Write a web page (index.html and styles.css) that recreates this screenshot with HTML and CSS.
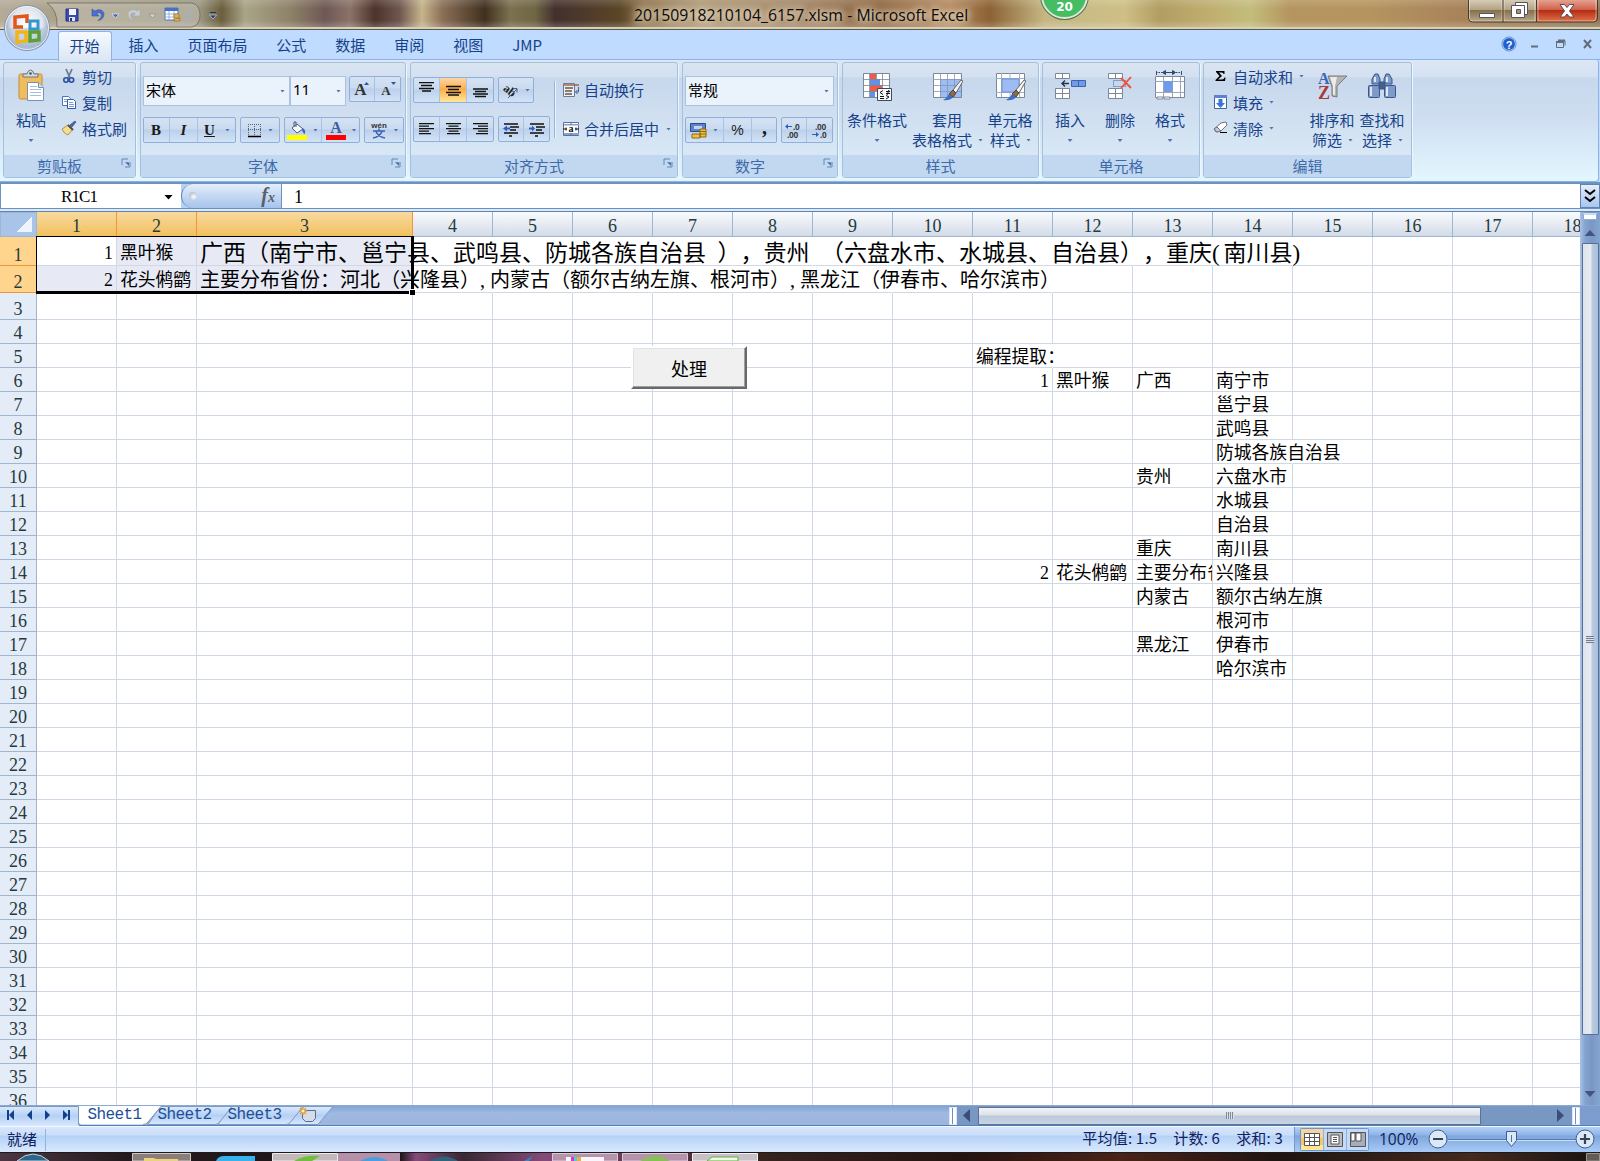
FILE: index.html
```html
<!DOCTYPE html>
<html lang="zh-CN">
<head>
<meta charset="utf-8">
<title>20150918210104_6157.xlsm - Microsoft Excel</title>
<link rel="stylesheet" href="styles.css">
</head>
<body>
<div class="window">

  <header class="titlebar">
    <svg class="qat" width="230" height="29" viewBox="0 0 230 29">
      <path d="M47 3H192q8 2 8 12t-8 12H57Q58 10 47 3z" fill="#dcd8d0" fill-opacity=".35" stroke="#6b665e" stroke-opacity=".75"/>
      <g>
        <path d="M66 9h12v12H66z" fill="#3c49b4" stroke="#26307c"/><path d="M69 9h7v6h-7z" fill="#f3f5fb"/><path d="M69 17h6v4h-6z" fill="#dfe4f4"/><path d="M70 18h2v3h-2z" fill="#26307c"/>
        <path d="M92 9v7h7l-2.500-2.500q4-2 5 1 .5 3-3.500 6 6-1 6-7-2-6-9.500-2.500z" fill="#4a72cc" stroke="#2d50a4" stroke-width=".6"/>
        <path d="M112 14h7l-3.500 4z" fill="#3f66a8" stroke="#e8eef8" stroke-width=".7"/>
        <path d="M140 9v7h-7l2.500-2.500q-4-2-5 1-.5 3 3.500 6-6-1-6-7 2-6 9.500-2.500z" fill="#c9cfd6" stroke="#a4a9ad" stroke-width=".6"/>
        <path d="M149 14h7l-3.500 4z" fill="#d5d5d5" stroke="#8f8c86" stroke-width=".7"/>
        <path d="M165 8h13v12h-13z" fill="#fff" stroke="#4f76b8"/><path d="M165 8h13v3h-13z" fill="#4772c4"/><path d="M165 14h13M165 17h13M169 11v9M174 11v9" stroke="#85a3d6" stroke-width=".8"/>
        <path d="M174 14h5v4h-5zM174 19l6-1v3h-6z" fill="#e2b04a" stroke="#8e6b22" stroke-width=".6"/>
        <path d="M189.500 9v13" stroke="#8fb4e6"/>
        <path d="M210 12.500h6" stroke="#24344f"/><path d="M209.500 15h7l-3.500 4z" fill="#24406e" stroke="#dce4ee" stroke-width=".6"/>
      </g>
    </svg>
    <h1 class="title">20150918210104_6157.xlsm - Microsoft Excel</h1>
    <span class="score">20</span>
    <svg class="winbtns" width="132" height="24" viewBox="0 0 132 24">
      <defs><linearGradient id="wg" x2="0" y2="1"><stop offset="0" stop-color="#d9cfba"/><stop offset=".47" stop-color="#b3a283"/><stop offset=".5" stop-color="#86714e"/><stop offset="1" stop-color="#bba987"/></linearGradient>
      <linearGradient id="wr" x2="0" y2="1"><stop offset="0" stop-color="#e6a897"/><stop offset=".47" stop-color="#cf604a"/><stop offset=".5" stop-color="#b52c12"/><stop offset="1" stop-color="#e2754f"/></linearGradient></defs>
      <path d="M1.500-1v19q0 4 4 4h121q4 0 4-4v-19z" fill="url(#wg)"/>
      <path d="M70-1v23h57q3 0 3-4v-19z" fill="url(#wr)"/>
      <path d="M2.500 0v18q0 3 3 3H35V0M37 0v21h31V0M71 0v21h55q3 0 3-3V0" fill="none" stroke="#fff" stroke-opacity=".45"/>
      <path d="M1.500-1v19q0 4 4 4h121q4 0 4-4v-19M36 0v22M69.500 0v22" fill="none" stroke="#4a3c2a"/>
      <path d="M12.500 13.500h15v4h-15z" fill="#fff" stroke="#54535e"/>
      <path d="M48.500 2.500h12v12h-3v3h-13v-12h4z" fill="#fff" stroke="#54535e"/><path d="M49.500 9.500h4v4h-4z" fill="#a4936f" stroke="#54535e"/><path d="M48 5.500h9.500V15" fill="none" stroke="#54535e"/>
      <path d="M93 4.500h4.500l2.500 3 2.500-3h4.500l-4.500 6.500 4.500 6h-4.500l-2.500-3-2.500 3H93l4.500-6z" fill="#fff" stroke="#5a4a52"/>
    </svg>
  </header>

  <nav class="tabs">
    <span class="tab active">开始</span><span class="tab">插入</span><span class="tab">页面布局</span><span class="tab">公式</span><span class="tab">数据</span><span class="tab">审阅</span><span class="tab">视图</span><span class="tab">JMP</span>
    <svg class="docbtns" width="100" height="28" viewBox="0 0 100 28">
      <circle cx="13" cy="14" r="6.500" fill="#1f5fd0" stroke="#f3f8ff"/><circle cx="13" cy="14" r="7" fill="none" stroke="#2f62b4" stroke-width=".7"/>
      <text x="13" y="18.500" text-anchor="middle" class="help">?</text>
      <path d="M35 16.500h7" stroke="#636c7a" stroke-width="2"/>
      <path d="M60.500 12.500h7v5h-7zM63 10.500h6v5" fill="none" stroke="#636c7a"/><path d="M60 12h8M62 10.500h7" stroke="#636c7a" stroke-width="2"/>
      <path d="M88 10l7 8M95 10l-7 8" stroke="#636c7a" stroke-width="2"/>
    </svg>
    <svg class="orb" width="54" height="54" viewBox="0 0 54 54">
      <defs><radialGradient id="og" cx=".5" cy=".4"><stop offset="0" stop-color="#fff"/><stop offset=".7" stop-color="#dfe5ee"/><stop offset="1" stop-color="#93a4bd"/></radialGradient></defs>
      <circle cx="27" cy="27" r="22.500" fill="url(#og)" stroke="#8493aa"/>
      <path d="M6 27h42a21 21 0 0 1-42 0z" fill="#b5c7df" opacity=".65"/>
      <circle cx="27" cy="27" r="21.500" fill="none" stroke="#fff" stroke-opacity=".8"/>
      <g fill="none" stroke-width="3.500"><path d="M27 22v-7l-12 1v10h8" stroke="#e2561c"/><path d="M30 20h8v8h-8z" stroke="#3496cf" stroke-width="3"/><path d="M17 31h9v9l-9 1z" stroke="#f2b41b"/><path d="M30 31h9v8l-9 1z" stroke="#5c9f35"/></g>
    </svg>
  </nav>

  <section class="ribbon">
    <div class="group clipboard">
      <div class="body">
        <div class="big paste">
          <svg width="32" height="34" viewBox="0 0 32 34"><rect x="4" y="5" width="23" height="25" rx="1.500" fill="#f0bd5d" stroke="#c48d32"/><path d="M8 8h15V5h-4q-1-4-3.500-4T12 5H8z" fill="#d8dce2" stroke="#6d7480"/><circle cx="15.500" cy="4.500" r="1.300" fill="#4a5260"/><path d="M12.500 13.500h11l5 5v13h-16z" fill="#fff" stroke="#7690b8"/><path d="M23.500 13.500v5h5" fill="#d3dff0" stroke="#7690b8"/><path d="M15 17.500h7M15 20.500h11M15 23.500h11M15 26.500h11" stroke="#a8bcdb"/></svg>
          <span>粘贴</span><i class="arr"></i>
        </div>
        <div class="list">
          <div><svg width="16" height="16" viewBox="0 0 16 16"><path d="M5 1l4 9M11 1L7 10" stroke="#6d7c96" stroke-width="1.800"/><circle cx="5" cy="12" r="2.200" fill="none" stroke="#27509f" stroke-width="1.600"/><circle cx="10.500" cy="12" r="2.200" fill="none" stroke="#27509f" stroke-width="1.600"/></svg>剪切</div>
          <div><svg width="16" height="16" viewBox="0 0 16 16"><path d="M1.500 2.500h6l2 2v7h-8z" fill="#fff" stroke="#4b74b5"/><path d="M6.500 5.500h6l2 2v7h-8z" fill="#fff" stroke="#2f5ba6"/><path d="M3 5.500h3M3 7.500h3M8 8.500h4M8 10.500h5M8 12.500h5" stroke="#7d9bd0"/></svg>复制</div>
          <div><svg width="16" height="16" viewBox="0 0 16 16"><path d="M9 5l5-4 1 1-4 5z" fill="#4966a8" stroke="#2b4074" stroke-width=".6"/><path d="M1 9l6-4 5 4-5 6q-4-1-6-6z" fill="#f5df8e" stroke="#9a7f3a" stroke-width=".8"/><path d="M7 5l5 5" stroke="#4d4d55" stroke-width="2"/></svg>格式刷</div>
        </div>
      </div>
      <div class="label launch">剪贴板<svg class="dl" width="10" height="10" viewBox="0 0 10 10"><path d="M1 7V1h6M9 4v5H4" fill="none" stroke="#6286b8"/><path d="M4 4l4 4V4.500z" fill="#46699e"/></svg></div>
    </div>

    <div class="group font">
      <div class="body rows">
        <div class="row r1">
          <div class="combo w146">宋体<i class="arr"></i></div><div class="combo w56 near"><span class="num">11</span><i class="arr"></i></div>
          <div class="btns pair"><span class="b w26"><b class="gr1">A</b><i class="tri up"></i></span><span class="b w26"><b class="gr2">A</b><i class="tri dn"></i></span></div>
        </div>
        <div class="row r2">
          <div class="btns"><span class="b w27 bold">B</span><span class="b w28 ital">I</span><span class="b w38 under"><u>U</u><i class="arr"></i></span></div>
          <div class="btns"><span class="b w39"><svg width="15" height="15" viewBox="0 0 15 15"><path d="M1.500 1v11M7.500 1v11M13.500 1v11M1 1.500h13M1 6.500h13" stroke="#56627c" stroke-dasharray="1 1"/><path d="M1 13.500h13" stroke="#000" stroke-width="1.500"/></svg><i class="arr"></i></span></div>
          <div class="btns"><span class="b w38"><svg width="20" height="19" viewBox="0 0 20 19"><path d="M5 7l5-4 6 5-6 4z" fill="#f7f9fc" stroke="#4c5c78"/><path d="M9 6V1H7v5" fill="none" stroke="#4c5c78"/><path d="M15 7q4 1 3 6-3-1-3-6z" fill="#3567be"/><path d="M0 14h20v5H0z" fill="#ff0"/></svg><i class="arr"></i></span><span class="b w38"><svg width="20" height="19" viewBox="0 0 20 19"><text x="10" y="12" text-anchor="middle" class="acol">A</text><path d="M0 14h20v5H0z" fill="#f00"/></svg><i class="arr"></i></span></div>
          <div class="btns"><span class="b w39"><svg width="18" height="18" viewBox="0 0 18 18"><text x="9" y="7" text-anchor="middle" class="wen">wén</text><path d="M9 7.500v2M3 10h12M6 10.500q2 5 9 6.500M12 10.500q-2 5-9 6.500" fill="none" stroke="#3a62b4" stroke-width="1.500"/></svg><i class="arr"></i></span></div>
        </div>
      </div>
      <div class="label launch">字体<svg class="dl" width="10" height="10" viewBox="0 0 10 10"><path d="M1 7V1h6M9 4v5H4" fill="none" stroke="#6286b8"/><path d="M4 4l4 4V4.500z" fill="#46699e"/></svg></div>
    </div>

    <div class="group align">
      <div class="body split">
        <div class="rows">
          <div class="row r1">
            <div class="btns"><span class="b w27"><svg width="15" height="16" viewBox="0 0 15 16"><path d="M0 2.500h15M2 5.500h11M0 8.500h15M3 11h9" transform="translate(0 -2)" stroke="#111" stroke-width="1.300"/></svg></span><span class="b w27 on"><svg width="15" height="16" viewBox="0 0 15 16"><path d="M0 4.500h15M2 7.500h11M0 10.500h15M2 13h11" stroke="#111" stroke-width="1.300"/></svg></span><span class="b w27"><svg width="15" height="16" viewBox="0 0 15 16"><path d="M0 7h15M2 9.500h11M0 12h15M2 14.500h11" stroke="#111" stroke-width="1.300"/></svg></span></div>
            <div class="btns"><span class="b w36"><svg width="17" height="17" viewBox="0 0 17 17"><text x="1" y="8" transform="rotate(38 1 7)" class="abt">ab</text><path d="M6 16L15 7M11 6.500h4v4" fill="none" stroke="#555d6b"/></svg><i class="arr"></i></span></div>
          </div>
          <div class="row r2">
            <div class="btns"><span class="b w27"><svg width="15" height="12" viewBox="0 0 15 12"><path d="M0 .7h15M0 3.200h10M0 5.700h15M0 8.200h10M0 10.700h12" stroke="#111" stroke-width="1.300"/></svg></span><span class="b w27"><svg width="15" height="12" viewBox="0 0 15 12"><path d="M0 .7h15M2.500 3.200h10M0 5.700h15M2.500 8.200h10M1 10.700h13" stroke="#111" stroke-width="1.300"/></svg></span><span class="b w27"><svg width="15" height="12" viewBox="0 0 15 12"><path d="M0 .7h15M5 3.200h10M0 5.700h15M5 8.200h10M3 10.700h12" stroke="#111" stroke-width="1.300"/></svg></span></div>
            <div class="btns"><span class="b w26"><svg width="16" height="15" viewBox="0 0 16 15"><path d="M1 2h14M7 5h9M7 8h6M1 11h14M6 14h3" stroke="#111" stroke-width="1.400"/><path d="M0 6.500l4-3v2h3v2H4v2z" fill="#2b5fc4"/></svg></span><span class="b w26"><svg width="16" height="15" viewBox="0 0 16 15"><path d="M1 2h14M7 5h9M7 8h6M1 11h14M6 14h3" stroke="#111" stroke-width="1.400"/><path d="M6 6.500l-3-3v2H0v2h3v2z" fill="#2b5fc4"/></svg></span></div>
          </div>
        </div>
        <div class="side">
          <div><svg width="17" height="16" viewBox="0 0 17 16"><path d="M.5 1.500h11v13H.5z" fill="#e9f0fa" stroke="#6c7c98"/><path d="M1 3h15" stroke="#a05a32" stroke-width="1.400"/><path d="M2 6h8M2 9h7M2 12h7" stroke="#6c5640" stroke-width="1.300"/><path d="M15.500 5v5h-3m2-2l-2 2 2 2" fill="none" stroke="#4a6594"/></svg><span>自动换行</span></div>
          <div><svg width="17" height="16" viewBox="0 0 17 16"><path d="M.5 1.500h15v13H.5z" fill="#fff" stroke="#5e7195"/><path d="M1 3h15v1.500H1zM1 12h15v2H1z" fill="#85a3d0"/><path d="M8 1v3M8 12v3" stroke="#5e7195"/><text x="8" y="11" text-anchor="middle" class="mg">a</text><path d="M0 8h4M12 8h4M3 6.500v3M13 6.500v3" stroke="#111"/></svg><span>合并后居中</span><i class="arr"></i></div>
        </div>
      </div>
      <div class="label launch">对齐方式<svg class="dl" width="10" height="10" viewBox="0 0 10 10"><path d="M1 7V1h6M9 4v5H4" fill="none" stroke="#6286b8"/><path d="M4 4l4 4V4.500z" fill="#46699e"/></svg></div>
    </div>

    <div class="group number">
      <div class="body rows">
        <div class="row r1"><div class="combo w149">常规<i class="arr"></i></div></div>
        <div class="row r2">
          <div class="btns"><span class="b w39"><svg width="17" height="17" viewBox="0 0 17 17"><path d="M.5 1.500h15v8H.5z" fill="#5c83cc" stroke="#28498d"/><path d="M4 4h8v3H4z" fill="#c3d5f2"/><path d="M10 7h6v8h-6zM2 12h8v4H2z" fill="#efc03e" stroke="#8f6814"/><path d="M10 9.500h6M10 12h6" stroke="#8f6814"/></svg><i class="arr"></i></span><span class="b w28 pct">%</span><span class="b w25 comma">,</span></div>
          <div class="btns"><span class="b w26"><svg width="17" height="15" viewBox="0 0 17 15"><text x="8" y="7" class="dec">.0</text><text x="2" y="14.500" class="dec">.00</text><path d="M0 3.500l3-2.500v2h4v1H3v2z" fill="#2b5fc4"/></svg></span><span class="b w26"><svg width="17" height="15" viewBox="0 0 17 15"><text x="3" y="7" class="dec">.00</text><text x="8" y="14.500" class="dec">.0</text><path d="M7 11.500L4 9v2H0v1h4v2z" fill="#2b5fc4"/></svg></span></div>
        </div>
      </div>
      <div class="label launch">数字<svg class="dl" width="10" height="10" viewBox="0 0 10 10"><path d="M1 7V1h6M9 4v5H4" fill="none" stroke="#6286b8"/><path d="M4 4l4 4V4.500z" fill="#46699e"/></svg></div>
    </div>

    <div class="group styles">
      <div class="body">
        <div class="big w68"><svg width="32" height="34" viewBox="0 0 32 34"><path d="M2.500 4.500h26v24h-26z" fill="#fff" stroke="#7c879a"/><path d="M9 5h6v5H9zM9 16h12v6H9z" fill="#ef5b43"/><path d="M9 10h10v6H9zM9 22h5v6H9z" fill="#6491e4"/><path d="M2 10.500h27M2 16.500h27M2 22.500h27M8.500 4v25M15.500 4v6M21.500 4v25" stroke="#7c879a" stroke-width=".8"/><path d="M16.500 19.500h14v12h-14z" fill="#f5f8fd" stroke="#3c4a64"/><path d="M22 21.500l-3 2 3 2M19 27.500h4M19 29.500h4M25 22.500h4M25 24.500h4M28 21l-2 5M25 26.500l3 1.500-3 2" fill="none" stroke="#111"/></svg><span>条件格式</span><i class="arr"></i></div>
        <div class="big w72"><svg width="32" height="34" viewBox="0 0 32 34"><path d="M2.500 4.500h28v24h-28z" fill="#fff" stroke="#7c879a"/><path d="M9 10h21v18H9z" fill="#9ebcf4"/><path d="M2 10.500h28M2 16.500h28M2 22.500h28M9.500 4v24M16.500 4v24M23.500 4v24" stroke="#8595b4" stroke-width=".8"/><path d="M30 11l2 1-7 12-3-3z" fill="#f3f3f3" stroke="#666"/><path d="M22 21l3 3-3 4-4-3z" fill="#8d6b46" stroke="#564028"/><path d="M18 25l4 3q-3 4-10 3 4-2 6-6z" fill="#3e6fc6"/></svg><span>套用</span><span class="l2">表格格式<i class="arr"></i></span></div>
        <div class="big w54"><svg width="32" height="34" viewBox="0 0 32 34"><path d="M2.500 4.500h28v24h-28z" fill="#fff" stroke="#7c879a"/><path d="M2 9.500h28M2 23.500h28M7.500 4v24M25.500 4v24M16 4v5M16 24v4" stroke="#a3aec0"/><path d="M8 10h17v13H8z" fill="#9ebcf4" stroke="#6c91da"/><path d="M30 11l2 1-7 12-3-3z" fill="#f3f3f3" stroke="#666"/><path d="M22 21l3 3-3 4-4-3z" fill="#8d6b46" stroke="#564028"/><path d="M18 25l4 3q-3 4-10 3 4-2 6-6z" fill="#3e6fc6"/></svg><span>单元格</span><span class="l2">样式<i class="arr"></i></span></div>
      </div>
      <div class="label">样式</div>
    </div>

    <div class="group cells">
      <div class="body">
        <div class="big w50"><svg width="32" height="34" viewBox="0 0 32 34"><path d="M1.500 4.500h14v5h-14zM8.500 4v5M1.500 19.500h14v10h-14zM8.500 19v10M1 24.500h15" fill="#fff" stroke="#7c879a"/><path d="M17.500 11.500h14v6h-14z" fill="#6f9bea" stroke="#3f62a8"/><path d="M24.500 11v7" stroke="#3f62a8"/><path d="M15 14.500H8m3-3l-3 3 3 3" fill="none" stroke="#1f3550" stroke-width="1.400"/></svg><span>插入</span><i class="arr"></i></div>
        <div class="big w50"><svg width="32" height="34" viewBox="0 0 32 34"><path d="M4.500 4.500h14v5h-14zM11.500 4v5M4.500 19.500h14v10h-14zM11.500 19v10M4 24.500h15" fill="#fff" stroke="#7c879a"/><path d="M9.500 11.500h12v6h-12z" fill="none" stroke="#3f62a8" stroke-dasharray="1 1"/><path d="M17 9l10 10M27 8L17 19" stroke="#ee5039" stroke-width="1.800"/></svg><span>删除</span><i class="arr"></i></div>
        <div class="big w50"><svg width="32" height="34" viewBox="0 0 32 34"><path d="M2 3.500h25" stroke="#2f4a70" stroke-dasharray="1.500 1"/><path d="M2.500 2v4M27.500 2v4M9 3.500h12M8.500 3.500l3-2v4zM21.500 3.500l-3-2v4z" fill="#1f3550" stroke="#2f4a70"/><path d="M1.500 7.500h29v21h-29z" fill="#fff" stroke="#7c879a"/><path d="M1 12.500h29M1 23.500h29M9.500 8v20M18.500 8v20M26.500 8v20" stroke="#9aa6bb"/><path d="M10 12h8.500v11H10z" fill="#6f9bea"/><path d="M3 28h6v2H3zM10 28h6v2h-6z" fill="#fff" stroke="#7c879a"/></svg><span>格式</span><i class="arr"></i></div>
      </div>
      <div class="label">单元格</div>
    </div>

    <div class="group edit">
      <div class="body">
        <div class="list">
          <div><svg width="15" height="16" viewBox="0 0 15 16"><path d="M3 3h8.500v3h-1q0-1.500-2-1.500H6L9 8l-4 3.500h4q2 0 2.500-2h1L12 13H2.500v-1L6.500 8 3 4z" fill="#000"/></svg>自动求和<i class="arr"></i></div>
          <div><svg width="15" height="16" viewBox="0 0 15 16"><path d="M1.500 1.500h12v13h-12z" fill="#fff" stroke="#44659c"/><path d="M1 1h13v3H1z" fill="#5b84cd"/><path d="M5.500 5h4v4h2.500l-4.500 5L3 9h2.500z" fill="#3b73dd"/></svg>填充<i class="arr"></i></div>
          <div><svg width="15" height="16" viewBox="0 0 15 16"><path d="M8 3l5-1 1 3-6 6-5 1-2-3z" fill="#fff" stroke="#6a7484"/><path d="M1 9l3 3 4-1-4-4z" fill="#c4c9d4" stroke="#6a7484"/><path d="M7 12.500h7" stroke="#000"/></svg>清除<i class="arr"></i></div>
        </div>
        <div class="big w50"><svg width="32" height="34" viewBox="0 0 32 34"><path d="M12 7h19L21 17v11l-5-1v-9z" fill="#b4b4b4" stroke="#7a7a7a"/><path d="M14 8h7l-2 9v9l-2-.5V17z" fill="#ececec"/><text x="2" y="15" class="sa">A</text><text x="2" y="30" class="sz">Z</text></svg><span>排序和</span><span class="l2">筛选<i class="arr"></i></span></div>
        <div class="big w50"><svg width="32" height="34" viewBox="0 0 32 34"><g fill="#7e9ac8" stroke="#3a5688"><path d="M9 5h3l2 5v5H6v-5zM20 5h3l3 5v5h-8v-5z"/><rect x="2.500" y="16.500" width="11" height="12" rx="1"/><rect x="18.500" y="16.500" width="11" height="12" rx="1"/><path d="M13 13h6v7h-6z" fill="#465f8f"/></g><path d="M5 18v9M21 18v9M9 8v5M21 8v5" stroke="#dce7f8" stroke-width="2"/></svg><span>查找和</span><span class="l2">选择<i class="arr"></i></span></div>
      </div>
      <div class="label">编辑</div>
    </div>
  </section>

  <section class="formula">
    <div class="namebox">R1C1<i class="bigarr"></i></div>
    <div class="fx"><i class="knob"></i><em>f<small>x</small></em></div>
    <div class="value">1</div>
    <div class="expand"><svg width="14" height="16" viewBox="0 0 14 16"><path d="M2 2l5 4 5-4M2 9l5 4 5-4" fill="none" stroke="#000" stroke-width="2"/></svg></div>
  </section>

  <main class="work">
    <div class="sheet" id="sheet">
      <button class="run">处理</button>
      <div class="selection"><i></i></div>
    </div>
    <div class="vscroll">
      <i class="vsplit"></i><i class="vup"></i><div class="vthumb"><i></i></div><i class="vdown"></i>
    </div>
  </main>

  <section class="bottom">
    <svg class="tabshape" width="336" height="20" viewBox="0 0 336 20">
      <defs><linearGradient id="tg" x2="0" y2="1"><stop offset="0" stop-color="#dcebfd"/><stop offset=".5" stop-color="#b5d0f5"/><stop offset="1" stop-color="#d8e8fc"/></linearGradient></defs>
      <path d="M0 0h79v20H0z" fill="url(#tg)"/><path d="M0 .5h78.500V19" fill="none" stroke="#7d96bc"/>
      <g fill="url(#tg)" stroke="#7d9ac6"><path d="M288 18.500h30l15-18h-31z"/><path d="M218 18.500h68q3 0 5-3l12-15h-73z"/><path d="M148 18.500h67q3 0 5-3l12-15h-72z"/></g>
      <path d="M79 0h82l-13 16q-2 2.500-5 2.500H82q-3 0-3-3z" fill="#fff"/><path d="M161 .5L148 16q-2 2.500-5 2.500" fill="none" stroke="#7d96bc"/>
      <path d="M8 4v10M69 4v10" stroke="#123f8c" stroke-width="2"/><path d="M14 4v10l-5-5zM32 4v10l-5-5zM45 4v10l5-5zM63 4v10l5-5z" fill="#123f8c"/>
      <path d="M302.500 4.500h13v8l-3 3h-7l-3-3z" fill="#d5dbe8" stroke="#5c6b87"/><path d="M303 1v8M299 5h8M300 2l6 6M306 2l-6 6" stroke="#e39a2c" stroke-width="1.300"/><circle cx="303" cy="5" r="1.500" fill="#fff3c0"/>
    </svg>
    <div class="sheetnames"><span>Sheet1</span><span>Sheet2</span><span>Sheet3</span></div>
    <div class="hscroll"><i class="hsplit"></i><i class="hl"></i><div class="hthumb"><i></i></div><i class="hr"></i><i class="hsplit"></i></div>
  </section>

  <footer class="status">
    <span class="ready">就绪</span>
    <span class="stats"><span>平均值: 1.5</span><span>计数: 6</span><span>求和: 3</span></span>
    <div class="views">
      <svg width="70" height="23" viewBox="0 0 70 23"><rect x=".5" y=".5" width="68" height="22" rx="1" fill="#c4daf6" stroke="#6e96cc"/><path d="M1 1h22v21H1z" fill="#f7c566"/><path d="M1 1h22v9H1z" fill="#f3d5a0"/><path d="M1 17h22v5H1z" fill="#ffe690"/><path d="M23.500 1v21M46.500 1v21" stroke="#8fb1de"/><path d="M4.500 5.500h15v12h-15zM4 9.500h16M4 13.500h16M9.500 5v13M14.500 5v13" fill="#fff" stroke="#555"/><path d="M27.500 4.500h15v14h-15z" fill="#b8bcc4" stroke="#555"/><path d="M31 7h8v9h-8z" fill="#fff" stroke="#555"/><path d="M33 9.500h4M33 11.500h4M33 13.500h4" stroke="#555"/><path d="M50.500 4.500h15v14h-15z" fill="#a8adb8" stroke="#555"/><path d="M51 5h4v8h-4zM56 5h5v8h-5z" fill="#fff" stroke="#555"/></svg>
    </div>
    <span class="pct100">100%</span>
    <svg class="zoomer" width="172" height="25" viewBox="0 0 172 25">
      <path d="M20 12.500h128" stroke="#5079b4"/><path d="M20 13.500h128" stroke="#cfe1fa"/>
      <g fill="#dbe8f8" stroke="#3f5f90"><circle cx="10" cy="12" r="9"/><circle cx="157" cy="12" r="9"/><path d="M78.500 4.500h10v9l-5 6-5-6z"/></g><path d="M83.500 8v7" stroke="#5074a8"/>
      <path d="M5 12h10M152 12h10M157 7v10" stroke="#354258" stroke-width="2.200"/>
    </svg>
  </footer>

  <div class="taskbar">
    <svg width="1600" height="9" viewBox="0 0 1600 9">
      <defs><linearGradient id="tb" x2="1" y2="0"><stop offset="0" stop-color="#4c3743"/><stop offset=".08" stop-color="#24191c"/><stop offset=".25" stop-color="#1c1317"/><stop offset=".26" stop-color="#854b79"/><stop offset=".29" stop-color="#382733"/><stop offset=".34" stop-color="#854b79"/><stop offset=".47" stop-color="#38241f"/><stop offset=".6" stop-color="#24130f"/><stop offset=".7" stop-color="#4b2317"/><stop offset=".8" stop-color="#1f1410"/><stop offset=".92" stop-color="#452a1d"/><stop offset="1" stop-color="#181310"/></linearGradient></defs>
      <path d="M0 0h1600v9H0z" fill="url(#tb)"/><path d="M0 .5h1600" stroke="#1c1a1c"/>
      <path d="M132.500 9V1.500h58V9z" fill="#8a7d7a" stroke="#cfc8c4"/><path d="M272.500 9V1.500h65V9z" fill="#c5b8bb" stroke="#efeaec"/><path d="M338 1h62v8h-62z" fill="#b690a8"/><path d="M552.500 9V1.500h65V9zM622.500 9V1.500h65V9z" fill="#b693ac" stroke="#dccbd6"/><path d="M692.500 9V1.500h65V9z" fill="#c8c0c6" stroke="#f3eff2"/>
      <path d="M17 9q16-14 32 0z" fill="#2e6687" stroke="#c1d2de"/><path d="M144 9V6h10l2 1h22v2z" fill="#ecd27c"/><path d="M216 9q2-5 8-5h31v5z" fill="#39b1ec"/><path d="M294 9q10-6 26-5l-8 5z" fill="#6fbe3c"/><path d="M360 9q14-8 28 0z" fill="#4b9ee0"/><path d="M430 9q14-9 28 0z" fill="#31617c"/><path d="M524 9l9-5-4 5z" fill="#3287c9"/><path d="M566 5h38v4h-38z" fill="#f7f7fb"/><path d="M571 5h3v4h-3z" fill="#d53bd0"/><path d="M574 5h3v4h-3z" fill="#44d3df"/><path d="M577 5h4v4h-4z" fill="#f2b134"/><path d="M640 9q15-10 30 0z" fill="#86c154"/><path d="M707 9l5-4h26v4z" fill="#eef7e8" stroke="#63b33b"/>
      <path d="M1586.500 1.500h13V9h-13z" fill="#625b56" stroke="#9b938c"/>
    </svg>
  </div>
</div>
<script src="sheet.js"></script>
</body>
</html>
```
FILE: styles.css
```css
* { box-sizing: border-box; }
body { margin: 0; font-family: "Noto Sans CJK SC", sans-serif; font-size: 15px; color: #15428b; }
.window { width: 1600px; height: 1161px; overflow: hidden; display: flex; flex-direction: column; background: #bfdbff; }
svg { display: block; flex: none; }
i { font-style: normal; }

/* title bar */
.titlebar { position: relative; height: 30px; flex: none; border-bottom: 1px solid #5b5846; box-shadow: inset 0 -2px 0 #d8cfba;
  background: linear-gradient(180deg, rgba(255,255,255,.15), rgba(255,255,255,0) 30%, rgba(255,255,255,0) 70%, rgba(255,255,255,.25)),
  linear-gradient(90deg, #b5ab98 0, #aaa18a 60px, #9a9680 200px, #6b5e3e 222px, #a9a588 245px, #8e8268 290px, #6f5855 325px, #8c7368 350px, #4c332b 375px, #705851 400px, #c5b58c 422px, #8c7058 442px, #41301f 485px, #7c7150 510px, #6f6644 535px, #43302d 555px, #5b4627 620px, #8c7048 645px, #ad9572 700px, #a18362 800px, #8d6440 880px, #b38a60 950px, #8c6234 990px, #c5b784 1045px, #cdbf85 1125px, #b29d62 1160px, #c0ae70 1210px, #c3bd7c 1250px, #b5955f 1290px, #b5945f 1370px, #a8835a 1460px, #8e7a58 1600px); }
.qat { position: absolute; left: 0; top: 0; }
.title { position: absolute; left: 634px; top: 4px; margin: 0; font: 400 15.800px/23px "Open Sans", sans-serif; letter-spacing: .04px; color: #0b0b0b; white-space: nowrap; text-shadow: 0 0 6px rgba(255,245,225,.9), 0 0 9px rgba(255,245,225,.8), 0 0 12px rgba(255,245,225,.7); }
.score { position: absolute; left: 1041px; top: -28px; width: 47px; height: 47px; border-radius: 50%; background: #45bd62; border: 2px solid #dfe8d8; box-shadow: 0 0 0 1px #55704f; color: #fff; font: 700 12px/66px "DejaVu Sans", sans-serif; text-align: center; }
.winbtns { position: absolute; right: 1px; top: 0; }

/* ribbon tabs */
.tabs { position: relative; height: 30px; flex: none; display: flex; padding-left: 58px; border-bottom: 1px solid #8db2e3; background: #bfdbff; }
.tab { height: 30px; padding: 0 12.400px; margin-right: 4.200px; font-size: 15px; line-height: 29px; white-space: nowrap; }
.tab.active { width: 54px; padding: 0 10.500px; margin-right: 4px; margin-top: 1px; line-height: 27px; border: 1px solid #8db2e3; border-bottom: 0; border-radius: 3px 3px 0 0; background: linear-gradient(#f6faff, #dbe6f4); position: relative; }
.docbtns { position: absolute; left: 1496px; top: 0; }
.orb { position: absolute; left: 0; top: -29px; }
.help { font: 700 11px "Liberation Sans", sans-serif; fill: #fff; }

/* ribbon */
.ribbon { height: 122px; flex: none; display: flex; gap: 4px; padding: 2px 0 0 3px; margin-right: 1px; border-bottom: 1px solid #8db2e3; border-right: 1px solid #8db2e3; border-radius: 0 3px 4px 0; background: linear-gradient(#dde8f5 0, #d4e1f2 17px, #c7d8ed 18px, #cfdff1 60px, #e2f6fe 118px); }
.group { height: 116px; border: 1px solid #a3c0de; border-radius: 3px; display: flex; flex-direction: column; box-shadow: 1px 1px 0 #eef6fd; background: linear-gradient(#dae5f2 0, #d3e0f0 14px, #c7d7ec 15px, #d9e8f5 93px); flex: none; }
.body { flex: 1; display: flex; min-height: 0; }
.label { height: 22px; background: #c1d8f0; color: #3e6aaa; text-align: center; font-size: 15px; line-height: 22px; position: relative; }
.label.launch { padding-right: 20px; }
.dl { position: absolute; right: 4px; top: 3px; }
.clipboard { width: 133px; } .font { width: 266px; } .align { width: 268px; } .number { width: 156px; }
.styles { width: 197px; }
.cells { width: 158px; margin-left: -1px; } .cells .body { padding-left: 2px; }
.edit { width: 209px; margin-left: -1px; }
.arr { display: inline-block; flex: none; width: 5px; height: 3px; background: #4d77b5; clip-path: polygon(0 0, 100% 0, 50% 100%); }

.big { display: flex; flex-direction: column; align-items: center; padding-top: 6px; }
.big span { font-size: 15px; line-height: 20px; white-space: nowrap; margin-top: 7px; }
.big span.l2 { margin-top: 0; display: flex; align-items: center; gap: 6px; padding-left: 1px; }
.big > .arr { margin-top: 9px; }
.paste { width: 54px; }
.list { display: flex; flex-direction: column; width: 76px; }
.list div { height: 26px; display: flex; align-items: center; white-space: nowrap; }
.list svg { margin-right: 5px; }
.list .arr { margin-left: 6px; }
.clipboard .list svg { margin-left: 3px; }
.edit .list { width: 103px; padding-left: 9px; }

.rows { display: flex; flex-direction: column; padding-left: 2px; }
.row { display: flex; gap: 4px; align-items: flex-start; }
.r1 { margin-top: 13px; height: 41px; }
.align .r1 { margin-top: 14px; height: 39px; }
.combo { height: 30px; border: 1px solid #abc1de; background: #eaf2fb; color: #000; display: flex; align-items: center; justify-content: space-between; padding: 0 4px 4px 2px; font-size: 15px; }
.combo .arr { margin-top: 4px; }
.near { margin-left: -4px; }
.pair { margin-left: -1px; }
.num { font-family: "Noto Sans", sans-serif; }
.btns { display: flex; height: 26px; border: 1px solid #8fb0dd; border-radius: 2px; background: linear-gradient(#d5e2f3 0, #cadbf0 45%, #bcd0ea 50%, #d2e3f6 100%); }
.b { height: 24px; display: flex; align-items: center; justify-content: center; gap: 6px; border-right: 1px solid #a9c3e6; color: #1a1a1a; position: relative; margin: 0; }
.b:last-child { border-right: 0; }
.btns .b:first-child { margin-left: -1px; } .btns .b:last-child { margin-right: -1px; }
.w25 { width: 25px; } .w26 { width: 26px; } .w27 { width: 27px; } .w28 { width: 28px; } .w36 { width: 36px; } .w38 { width: 38px; } .w39 { width: 40px; } .w50 { width: 50px; } .w54 { width: 54px; } .w56 { width: 56px; } .w68 { width: 68px; } .w72 { width: 72px; } .w146 { width: 147px; } .w149 { width: 149px; }
.number .w39 { width: 39px; }
.on { background: linear-gradient(#fbd5a5 0, #fcba64 35%, #fdab45 45%, #fee79a 100%); }
.bold { font: 700 15px "Liberation Serif", serif; } .ital { font: italic 700 15px "Liberation Serif", serif; } .under { font: 700 15px "Liberation Serif", serif; }
.under { gap: 10px; }
.gr1 { font: 700 17px/20px "Liberation Serif", serif; color: #333; margin: 2px 2px 0 0; } .gr2 { font: 700 13px/20px "Liberation Serif", serif; color: #333; margin: 4px 4px 0 0; }
.tri { position: absolute; right: 5px; top: 5px; width: 5px; height: 3px; background: #2b57a0; }
.tri.up { clip-path: polygon(50% 0, 100% 100%, 0 100%); } .tri.dn { clip-path: polygon(0 0, 100% 0, 50% 100%); }
.acol { font: 700 16px "Liberation Serif", serif; fill: #3f5e9b; }
.wen { font: 700 8px "Liberation Sans", sans-serif; fill: #333; }
.abt { font: 700 12px "Liberation Serif", serif; fill: #222; }
.mg { font: 700 10px "Liberation Serif", serif; fill: #111; }
.pct { font: 14px "Liberation Sans", sans-serif; } .comma { font: 700 20px/20px "Liberation Serif", serif; padding-bottom: 7px; }
.dec { font: 700 8.500px "Liberation Sans", sans-serif; fill: #333; letter-spacing: -.3px; }
.sa { font: 700 16px "Liberation Serif", serif; fill: #3d66b5; } .sz { font: 700 18px "Liberation Serif", serif; fill: #a83a3c; }
.side { margin: 18px 0 17px 4px; padding-left: 8px; border-left: 1px solid #93b5e1; box-shadow: inset 1px 0 0 #eaf3fd; display: flex; flex-direction: column; justify-content: space-between; }
.side div { display: flex; align-items: center; gap: 4px; white-space: nowrap; line-height: 18px; }
.side .arr { margin-left: 3px; }

/* formula bar */
.formula { height: 30px; flex: none; padding-bottom: 3px; border-top: 2px solid #6b92c0; border-bottom: 1px solid #5d84b5; display: flex; background: linear-gradient(#6b92bd 0, #6b92bd 1px, #dce9fa 1px) 0 24px / 100% 3px no-repeat #b7d1f3; }
.namebox { width: 181px; height: 24px; background: #fff; border-left: 1px solid #6b92c0; display: flex; align-items: center; padding: 2px 8px 0 60px; justify-content: space-between; font: 17px/24px "Liberation Serif", serif; color: #000; letter-spacing: -.9px; }
.bigarr { width: 9px; height: 5px; background: #000; clip-path: polygon(0 0, 100% 0, 50% 100%); }
.fx { width: 101px; height: 24px; border-left: 1px solid #5e88bd; border-right: 1px solid #6b92c0; border-radius: 13px 0 0 13px; background: linear-gradient(#e4eefb, #c4d8f2 50%, #a6c4ec); display: flex; align-items: center; justify-content: space-between; padding: 0 6px 0 7px; }
.fx em { font: italic 700 20px/20px "Liberation Serif", serif; color: #5a5f68; } .fx small { font-size: 14px; }
.knob { width: 8px; height: 8px; border-radius: 50%; background: radial-gradient(circle at 60% 60%, #fff, #97a9c4); }
.value { flex: 1; background: #fff; height: 24px; padding-left: 12px; font: 18px/27px "Liberation Serif", serif; color: #000; }
.expand { width: 20px; height: 24px; border: 1px solid #5d84b5; background: linear-gradient(#e4eefb, #a9c6ec); display: flex; align-items: center; justify-content: center; }

/* worksheet */
.work { height: 893px; flex: none; display: flex; }
.sheet { width: 1580px; height: 893px; overflow: hidden; position: relative; background: #fff; }
.line { display: flex; width: 1620px; }
.cell, .rh { flex: none; border-right: 1px solid #d0d7e5; border-bottom: 1px solid #d0d7e5; display: flex; align-items: flex-end; color: #000; font-family: "Liberation Serif", "Noto Sans CJK SC", serif; font-size: 17.800px; line-height: 19px; white-space: nowrap; text-spacing-trim: space-all; }
.cell > span { position: relative; z-index: 3; padding-left: 3px; }
.cell.r { justify-content: flex-end; padding-right: 3px; }
.cell.open { border-right-color: transparent; }
.cell.clip { overflow: hidden; }
.cell.top { line-height: 23px; }
.cell.sel { background: #e7eaf5; }
.cell.s20 { font-size: 20px; line-height: 23px; } .cell.s23 { font-size: 23px; line-height: 23px; word-spacing: 5.700px; }
.half { display: inline-block; width: .5em; }
.rh { width: 37px; justify-content: center; background: #e4ecf7; border-color: #9eb6ce; color: #26393d; line-height: 19px; font-family: "Liberation Serif", serif; font-size: 18px; }
.rh.hot { background: #ffd58d; border-color: #f29536; }
.head .cell { height: 25px; justify-content: center; align-items: center; background: linear-gradient(#f9fcfd, #d3dbe9); border-color: #9eb6ce; color: #26393d; font-size: 18px; padding-top: 4px; }
.head .cell.hot { background: linear-gradient(#f9d99f, #f1c15f); border-color: #f29536; }
.corner { width: 37px; height: 25px; flex: none; border: 1px solid #9eb6ce; background: linear-gradient(135deg, transparent 50%, #eef4fc 50%) 16px 4px / 15px 15px no-repeat #a9c4e9; }
.selection { position: absolute; left: 36px; top: 24px; width: 378px; height: 58px; border: solid #000; border-width: 1.500px 3px 3px 1.500px; z-index: 2; }
.selection i { position: absolute; right: -4px; bottom: -4px; width: 6px; height: 6px; background: #000; border: solid #fff; border-width: 1px 0 0 1px; }
.run { position: absolute; left: 631px; top: 134px; width: 116px; height: 43px; border: solid; border-width: 2px 2px 2px 2px; border-color: #fff #696969 #696969 #fff; background: #f0f0f0; box-shadow: inset -1px -1px 0 #a0a0a0, inset 1px 1px 0 #e3e3e3; padding: 0; font: 18px/34px "Noto Sans CJK SC", sans-serif; color: #000; z-index: 2; }

.vscroll { width: 20px; background: linear-gradient(90deg, #a9c3e8 0, #84a3ce 5px, #7897c4 12px, #86a6d2 20px); display: flex; flex-direction: column; align-items: center; }
.vsplit { width: 14px; height: 7px; background: #fff; border: 1px solid #8fabd0; border-top: 2px solid #cbdcf2; margin: 1px 0 10px; }
.vup, .vdown { width: 11px; height: 6px; background: #43557c; }
.vup { clip-path: polygon(50% 0, 100% 100%, 0 100%); }
.vdown { clip-path: polygon(0 0, 100% 0, 50% 100%); margin-top: 56px; }
.vthumb { width: 17px; height: 792px; margin-top: 7px; border: 1px solid #5a6f96; border-radius: 1px; background: linear-gradient(90deg, #dfe4ec 0, #e6eaf1 8px, #bccbdf 9px, #a9bfdb 15px); display: flex; align-items: center; justify-content: center; }
.vthumb i { width: 8px; height: 7px; background: repeating-linear-gradient(#6e7c92 0 1px, #dbe3ee 1px 2px); }

/* sheet tabs */
.bottom { height: 21px; flex: none; position: relative; display: flex; justify-content: flex-end; border-top: 1px solid #8ba9d2; border-bottom: 1px solid #527fb4; background: linear-gradient(#84a4d6 0, #9fb9e0 7px, #9bb5dc 100%); }
.tabshape { position: absolute; left: 0; top: 0; }
.sheetnames { position: absolute; left: 87.500px; top: 0; display: flex; gap: 16px; font: 16px/19px "Liberation Mono", monospace; letter-spacing: -.6px; color: #1e4f96; }
.hscroll { width: 651px; height: 19px; background: #7897c3; display: flex; align-items: center; padding-right: 20px; box-shadow: inset -20px 0 0 #7c9dce; }
.hsplit { width: 8px; height: 18px; border: 1px solid #dce8f8; background: linear-gradient(90deg, #fff 2px, #6d8fc0 2px 3px, #fff 3px); }
.hl, .hr { width: 7px; height: 13px; background: #3c4d78; }
.hl { clip-path: polygon(0 50%, 100% 0, 100% 100%); margin: 0 8px 0 6px; }
.hr { clip-path: polygon(0 0, 100% 50%, 0 100%); margin: 0 8px 0 76px; }
.hthumb { width: 503px; height: 18px; border: 1px solid #5f7292; border-radius: 1px; background: linear-gradient(#f1f3f6 0, #dde2e9 7px, #bac9dc 8px, #c9d5e4 100%); display: flex; align-items: center; justify-content: center; }
.hthumb i { width: 8px; height: 7px; background: repeating-linear-gradient(90deg, #7c8797 0 1px, #dbe3ee 1px 2px); }

/* status bar */
.status { height: 26px; flex: none; display: flex; align-items: center; border-top: 1px solid #f2f8ff; background: linear-gradient(#d8e6fa 0, #cadefa 8px, #b4d1f7 9px, #d8e8fc 24px); color: #0d2060; font-size: 15px; }
.ready { width: 46px; padding-left: 7px; height: 22px; line-height: 20px; border-right: 1px solid #92b3df; }
.stats { margin-left: auto; display: flex; gap: 16px; padding-right: 11px; height: 25px; line-height: 22px; border-right: 1px solid #7698c8; letter-spacing: .2px; white-space: nowrap; }
.views { height: 25px; display: flex; align-items: center; padding: 0 9px 0 5px; background: linear-gradient(#b5d1f6, #8db4e8 8px, #7fa6dc 9px, #a7cbf8); }
.pct100 { width: 49px; font: 15.500px/24px "Open Sans", sans-serif; background: linear-gradient(#b5d1f6, #8db4e8 8px, #7fa6dc 9px, #a7cbf8); height: 25px; }
.zoomer { background: linear-gradient(#b5d1f6, #8db4e8 8px, #7fa6dc 9px, #a7cbf8); }
.taskbar { height: 9px; flex: none; }
```
FILE: sheet.js
```js
const widths = [80, 80, 216].concat(Array(15).fill(80));
const heights = [29, 27, 27].concat(Array(33).fill(24));
const hw = c => `<i class="half">${c}</i>`;

const data = {
  '1,1': ['1', 'r top'], '1,2': ['黑叶猴', 'sel top'],
  '1,3': ['广西（南宁市、邕宁县、武鸣县、防城各族自治县 ），贵州 （六盘水市、水城县、自治县），重庆' + hw('(') + '南川县' + hw(')'), 'sel s23'],
  '2,1': ['2', 'r sel top'], '2,2': ['花头鸺鹠', 'sel top'],
  '2,3': ['主要分布省份：河北（兴隆县）' + hw(',') + '内蒙古（额尔古纳左旗、根河市）' + hw(',') + '黑龙江（伊春市、哈尔滨市）', 'sel s20'],
  '5,11': ['编程提取：', 'open'],
  '6,11': ['1', 'r'], '6,12': ['黑叶猴'], '6,13': ['广西'], '6,14': ['南宁市'],
  '7,14': ['邕宁县'], '8,14': ['武鸣县'], '9,14': ['防城各族自治县', 'open'],
  '10,13': ['贵州'], '10,14': ['六盘水市'], '11,14': ['水城县'], '12,14': ['自治县'],
  '13,13': ['重庆'], '13,14': ['南川县'],
  '14,11': ['2', 'r'], '14,12': ['花头鸺鹠'], '14,13': ['主要分布省份', 'clip'], '14,14': ['兴隆县'],
  '15,13': ['内蒙古'], '15,14': ['额尔古纳左旗', 'open'], '16,14': ['根河市'],
  '17,13': ['黑龙江'], '17,14': ['伊春市'], '18,14': ['哈尔滨市']
};

// last column each long text runs into
const spill = { 1: 14, 2: 11 };

let html = '<div class="line head"><div class="corner"></div>';
widths.forEach((w, c) => {
  html += `<div class="cell${c < 3 ? ' hot' : ''}" style="width:${w}px">${c + 1}</div>`;
});
html += '</div>';

heights.forEach((h, i) => {
  const r = i + 1;
  html += `<div class="line" style="height:${h}px"><div class="rh${r < 3 ? ' hot' : ''}">${r}</div>`;
  widths.forEach((w, j) => {
    const c = j + 1;
    const [text, cls] = data[r + ',' + c] || ['', ''];
    const open = c > 2 && c <= (spill[r] || 0) ? ' open' : '';
    html += `<div class="cell ${cls || ''}${open}" style="width:${w}px">${text ? `<span>${text}</span>` : ''}</div>`;
  });
  html += '</div>';
});
document.getElementById('sheet').insertAdjacentHTML('afterbegin', html);
```
